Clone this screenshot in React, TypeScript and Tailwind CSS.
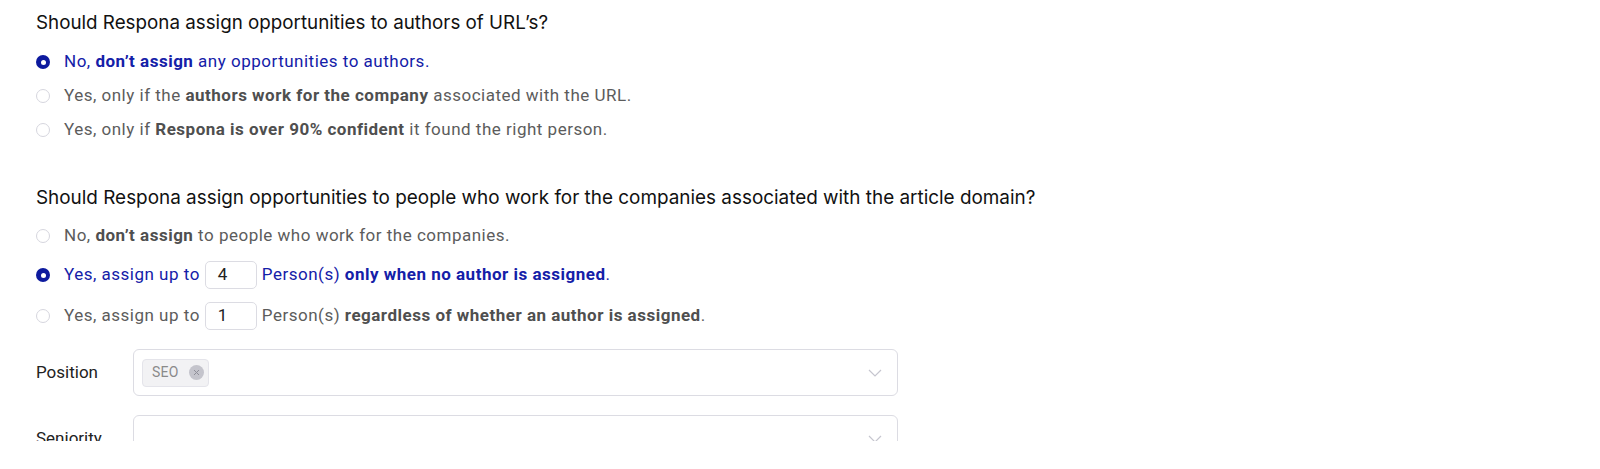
import React from "react";

const BLUE = "text-[#1420a8]";

function Radio({ checked }: { checked: boolean }) {
  return checked ? (
    <span className="flex h-[14px] w-[14px] shrink-0 items-center justify-center rounded-full bg-[#0d1a9e]">
      <span className="h-[5px] w-[5px] rounded-full bg-white" />
    </span>
  ) : (
    <span className="h-[14px] w-[14px] shrink-0 rounded-full border border-[#d6d6de] bg-white" />
  );
}

function NumBox({ value }: { value: string }) {
  return (
    <span className="mx-[5px] flex h-[28px] w-[52px] items-center rounded-[5px] border border-[#dcdce3] bg-white pl-[12px] text-[17px] text-[#222]">
      {value}
    </span>
  );
}

function Option({
  checked,
  children,
  tall,
}: {
  checked: boolean;
  children: React.ReactNode;
  tall?: boolean;
}) {
  return (
    <div
      className={`flex items-center gap-[14px] ${tall ? "h-[28px]" : "h-[24px]"} text-[17px] tracking-[0.5px] ${
        checked ? BLUE : "text-[#5c5c5c]"
      }`}
    >
      <Radio checked={checked} />
      <span className="flex items-center whitespace-nowrap">{children}</span>
    </div>
  );
}

function Chevron() {
  return (
    <svg width="14" height="8" viewBox="0 0 14 8" fill="none" className="shrink-0">
      <path d="M1 1l6 6 6-6" stroke="#c6c6cf" strokeWidth="1.2" />
    </svg>
  );
}

function Select({ children }: { children?: React.ReactNode }) {
  return (
    <div className="flex h-[47px] w-[765px] items-center rounded-[6px] border border-[#dcdce3] bg-white pl-[8px] pr-[15px]">
      <div className="flex flex-1 items-center">{children}</div>
      <Chevron />
    </div>
  );
}

export default function App() {
  return (
    <div
      className="h-[469px] w-[1600px] bg-white"
      style={{ fontFamily: "Roboto, 'Liberation Sans', sans-serif" }}
    >
      <div className="h-[441px] overflow-hidden pl-[36px] pt-[10px]">
        <h2
          className="h-[26px] text-[18.8px] leading-[26px] text-[#111]"
          style={{ fontFamily: "Inter, 'Liberation Sans', sans-serif" }}
        >
          Should Respona assign opportunities to authors of URL’s?
        </h2>
        <div className="mt-[14px] flex flex-col gap-[10px]">
          <Option checked>
            No,&nbsp;<b className="font-bold">don’t assign</b>&nbsp;any opportunities to authors.
          </Option>
          <Option checked={false}>
            Yes, only if the&nbsp;<b className="font-bold text-[#4f4f4f]">authors work for the company</b>
            &nbsp;associated with the URL.
          </Option>
          <Option checked={false}>
            Yes, only if&nbsp;<b className="font-bold text-[#4f4f4f]">Respona is over 90% confident</b>
            &nbsp;it found the right person.
          </Option>
        </div>

        <h2
          className="mt-[43px] h-[26px] text-[18.9px] leading-[26px] text-[#111]"
          style={{ fontFamily: "Inter, 'Liberation Sans', sans-serif" }}
        >
          Should Respona assign opportunities to people who work for the companies associated with the article
          domain?
        </h2>
        <div className="mt-[13px] flex flex-col gap-[13px]">
          <Option checked={false}>
            No,&nbsp;<b className="font-bold text-[#4f4f4f]">don’t assign</b>&nbsp;to people who work for the
            companies.
          </Option>
          <Option checked tall>
            Yes, assign up to
            <NumBox value="4" />
            Person(s)&nbsp;<b className="font-bold">only when no author is assigned</b>.
          </Option>
          <Option checked={false} tall>
            Yes, assign up to
            <NumBox value="1" />
            Person(s)&nbsp;<b className="font-bold text-[#4f4f4f]">regardless of whether an author is assigned</b>.
          </Option>
        </div>

        <div className="mt-[19px] flex items-center">
          <span className="w-[97px] text-[17px] text-[#222]">Position</span>
          <Select>
            <span className="flex h-[28px] items-center gap-[10px] rounded-[4px] border border-[#e4e4ea] bg-[#f2f2f4] pl-[9px] pr-[4px] text-[14px] tracking-[0.3px] text-[#8a8a8a]">
              SEO
              <span className="flex h-[15px] w-[15px] items-center justify-center rounded-full bg-[#c4c4cc]">
                <svg width="7" height="7" viewBox="0 0 7 7">
                  <path d="M1 1l5 5M6 1l-5 5" stroke="#8e8e98" strokeWidth="1" />
                </svg>
              </span>
            </span>
          </Select>
        </div>

        <div className="mt-[19px] flex items-center">
          <span className="w-[97px] text-[17px] text-[#222]">Seniority</span>
          <Select />
        </div>
      </div>
    </div>
  );
}
